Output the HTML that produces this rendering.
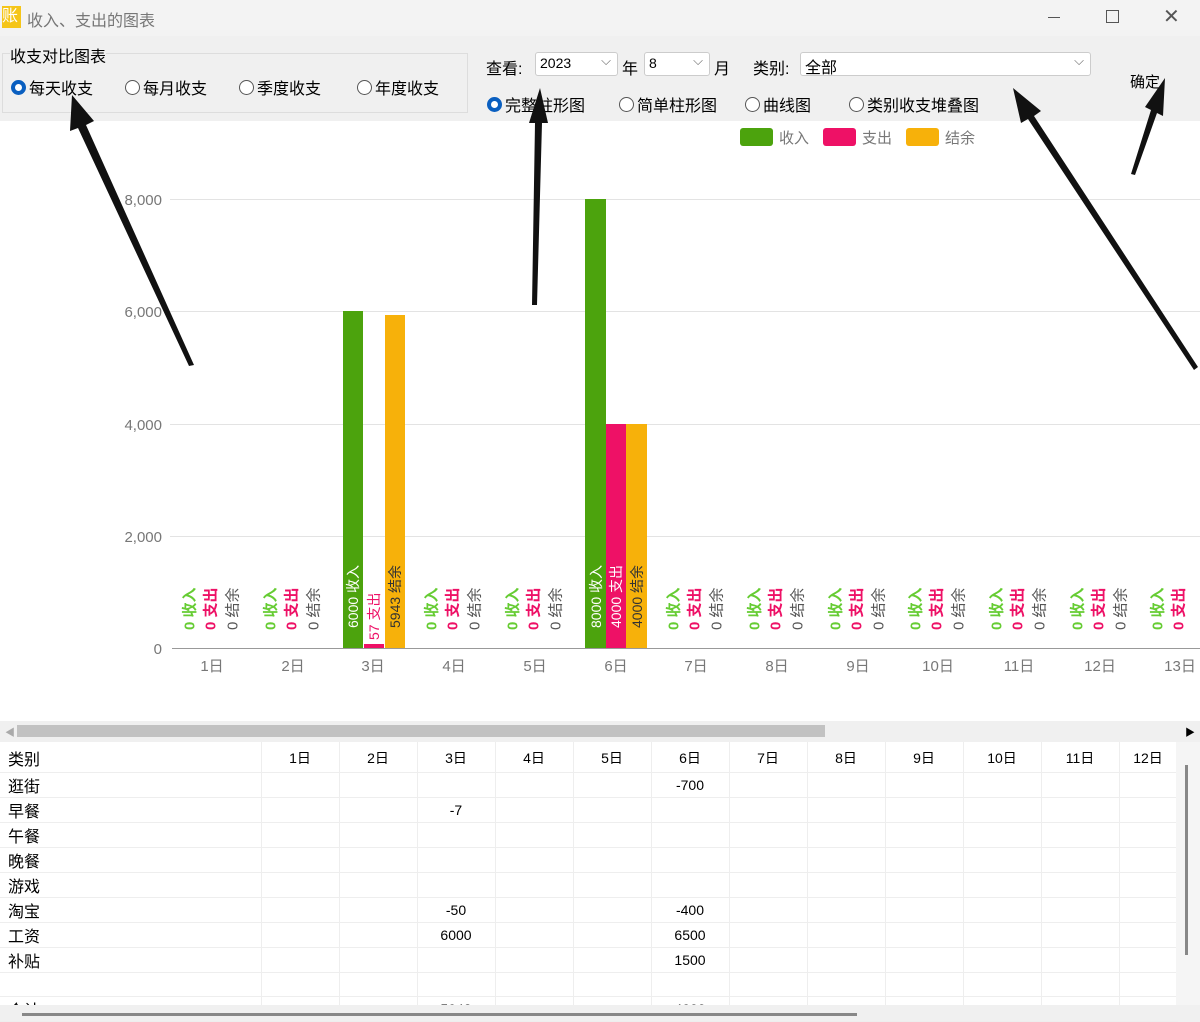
<!DOCTYPE html>
<html><head><meta charset="utf-8"><style>
*{margin:0;padding:0;box-sizing:border-box}
body{width:1200px;height:1021px;overflow:hidden;background:#f0f0f0;font-family:"Liberation Sans","Noto Sans CJK SC",sans-serif;font-size:15px;color:#000;position:relative}
.a{position:absolute}
.rad{position:absolute;display:flex;align-items:center;font-size:16px}
.rad i{display:inline-block;width:15px;height:15px;border:1px solid #555;border-radius:50%;margin-right:3px;background:#fff}
.rad i.on{border:4px solid #0a5fc0}
.sel{position:absolute;background:#fff;border:1px solid #ccc;border-radius:3px;height:24px;font-size:14px;padding:2px 4px}
.sel:after{content:"⌵";position:absolute;right:6px;top:0;color:#666;font-size:13px}
table{border-collapse:collapse;position:absolute;left:0;top:742px;background:#fff;font-size:14px}
td{border-right:1px solid #eee;border-bottom:1px solid #eee;height:24.8px;padding:0 8px;text-align:center}
tr:first-child td{height:30px;padding-top:2px}
td:first-child{text-align:left;font-size:16px}
</style></head><body>
<div class="a" style="left:0;top:0;width:1200px;height:36px;background:#f3f3f3"></div>
<div class="a" style="left:2px;top:6px;width:19px;height:22px;background:#f5c518;color:#fff;font-size:16px;line-height:22px">账</div>
<div class="a" style="left:27px;top:7px;font-size:16px;color:#777">收入、支出的图表</div>
<div class="a" style="left:1048px;top:17px;width:12px;height:1px;background:#555"></div>
<div class="a" style="left:1106px;top:10px;width:13px;height:13px;border:1px solid #555"></div>
<div class="a" style="left:1163px;top:4px;font-size:20px;color:#555">✕</div>

<div class="a" style="left:2px;top:53px;width:466px;height:60px;border:1px solid #ddd"></div>
<div class="a" style="left:10px;top:43px;font-size:16px;background:#f0f0f0">收支对比图表</div>
<div class="rad" style="left:11px;top:75px"><i class="on"></i>每天收支</div>
<div class="rad" style="left:125px;top:75px"><i></i>每月收支</div>
<div class="rad" style="left:239px;top:75px"><i></i>季度收支</div>
<div class="rad" style="left:357px;top:75px"><i></i>年度收支</div>

<div class="a" style="left:486px;top:55px;font-size:16px">查看:</div>
<div class="sel" style="left:535px;top:52px;width:83px">2023</div>
<div class="a" style="left:622px;top:55px;font-size:16px">年</div>
<div class="sel" style="left:644px;top:52px;width:66px">8</div>
<div class="a" style="left:714px;top:55px;font-size:16px">月</div>
<div class="a" style="left:753px;top:55px;font-size:16px">类别:</div>
<div class="sel" style="left:800px;top:52px;width:291px;font-size:16px;padding-top:1px">全部</div>
<div class="a" style="left:1130px;top:71px;font-size:15px">确定</div>
<div class="rad" style="left:487px;top:92px"><i class="on"></i>完整柱形图</div>
<div class="rad" style="left:619px;top:92px"><i></i>简单柱形图</div>
<div class="rad" style="left:745px;top:92px"><i></i>曲线图</div>
<div class="rad" style="left:849px;top:92px"><i></i>类别收支堆叠图</div>

<svg class="a" style="left:0;top:121px" width="1200" height="600" viewBox="0 121 1200 600">
<rect x="0" y="121" width="1200" height="600" fill="#fff"/>
<g font-size="15" fill="#777">
<rect x="740" y="128" width="33" height="18" rx="3" fill="#4ca30d"/><text x="779" y="143">收入</text>
<rect x="823" y="128" width="33" height="18" rx="3" fill="#ee1166"/><text x="862" y="143">支出</text>
<rect x="906" y="128" width="33" height="18" rx="3" fill="#f7b10a"/><text x="945" y="143">结余</text>
</g>
<g stroke="#e3e3e3"><line x1="170" y1="199.5" x2="1200" y2="199.5"/><line x1="170" y1="311.5" x2="1200" y2="311.5"/><line x1="170" y1="424.5" x2="1200" y2="424.5"/><line x1="170" y1="536.5" x2="1200" y2="536.5"/></g>
<line x1="172" y1="648.5" x2="1200" y2="648.5" stroke="#999"/>
<g font-size="15" fill="#777" text-anchor="end"><text x="162" y="205">8,000</text><text x="162" y="317">6,000</text><text x="162" y="430">4,000</text><text x="162" y="542">2,000</text><text x="162" y="654">0</text></g>
<g font-size="15" fill="#777" text-anchor="middle">
<text x="212" y="671">1日</text><text x="293" y="671">2日</text><text x="373" y="671">3日</text><text x="454" y="671">4日</text><text x="535" y="671">5日</text><text x="616" y="671">6日</text><text x="696" y="671">7日</text><text x="777" y="671">8日</text><text x="858" y="671">9日</text><text x="938" y="671">10日</text><text x="1019" y="671">11日</text><text x="1100" y="671">12日</text><text x="1180" y="671">13日</text></g>
<rect x="343" y="311" width="20" height="337" fill="#4ca30d"/>
<rect x="364" y="644" width="20" height="4" fill="#ee1166"/>
<rect x="385" y="315" width="20" height="333" fill="#f7b10a"/>
<rect x="585" y="199" width="21" height="449" fill="#4ca30d"/>
<rect x="606" y="424" width="20" height="224" fill="#ee1166"/>
<rect x="626" y="424" width="21" height="224" fill="#f7b10a"/>
<g font-size="14" dominant-baseline="central">
<text transform="translate(353,628) rotate(-90)" fill="#fff">6000 收入</text>
<text transform="translate(374,640) rotate(-90)" fill="#ee1166">57 支出</text>
<text transform="translate(395,628) rotate(-90)" fill="#333">5943 结余</text>
<text transform="translate(596,628) rotate(-90)" fill="#fff">8000 收入</text>
<text transform="translate(616,628) rotate(-90)" fill="#fff">4000 支出</text>
<text transform="translate(637,628) rotate(-90)" fill="#333">4000 结余</text>
</g>
<g font-size="15" font-weight="bold" dominant-baseline="central">
<text transform="translate(190,630) rotate(-90)" fill="#6c3">0 收入</text><text transform="translate(211,630) rotate(-90)" fill="#e16">0 支出</text><text transform="translate(233,630) rotate(-90)" fill="#555" font-weight="normal">0 结余</text>
<text transform="translate(271,630) rotate(-90)" fill="#6c3">0 收入</text><text transform="translate(292,630) rotate(-90)" fill="#e16">0 支出</text><text transform="translate(314,630) rotate(-90)" fill="#555" font-weight="normal">0 结余</text>
<text transform="translate(432,630) rotate(-90)" fill="#6c3">0 收入</text><text transform="translate(453,630) rotate(-90)" fill="#e16">0 支出</text><text transform="translate(475,630) rotate(-90)" fill="#555" font-weight="normal">0 结余</text>
<text transform="translate(513,630) rotate(-90)" fill="#6c3">0 收入</text><text transform="translate(534,630) rotate(-90)" fill="#e16">0 支出</text><text transform="translate(556,630) rotate(-90)" fill="#555" font-weight="normal">0 结余</text>
<text transform="translate(674,630) rotate(-90)" fill="#6c3">0 收入</text><text transform="translate(695,630) rotate(-90)" fill="#e16">0 支出</text><text transform="translate(717,630) rotate(-90)" fill="#555" font-weight="normal">0 结余</text>
<text transform="translate(755,630) rotate(-90)" fill="#6c3">0 收入</text><text transform="translate(776,630) rotate(-90)" fill="#e16">0 支出</text><text transform="translate(798,630) rotate(-90)" fill="#555" font-weight="normal">0 结余</text>
<text transform="translate(836,630) rotate(-90)" fill="#6c3">0 收入</text><text transform="translate(857,630) rotate(-90)" fill="#e16">0 支出</text><text transform="translate(879,630) rotate(-90)" fill="#555" font-weight="normal">0 结余</text>
<text transform="translate(916,630) rotate(-90)" fill="#6c3">0 收入</text><text transform="translate(937,630) rotate(-90)" fill="#e16">0 支出</text><text transform="translate(959,630) rotate(-90)" fill="#555" font-weight="normal">0 结余</text>
<text transform="translate(997,630) rotate(-90)" fill="#6c3">0 收入</text><text transform="translate(1018,630) rotate(-90)" fill="#e16">0 支出</text><text transform="translate(1040,630) rotate(-90)" fill="#555" font-weight="normal">0 结余</text>
<text transform="translate(1078,630) rotate(-90)" fill="#6c3">0 收入</text><text transform="translate(1099,630) rotate(-90)" fill="#e16">0 支出</text><text transform="translate(1121,630) rotate(-90)" fill="#555" font-weight="normal">0 结余</text>
<text transform="translate(1158,630) rotate(-90)" fill="#6c3">0 收入</text><text transform="translate(1179,630) rotate(-90)" fill="#e16">0 支出</text>
</g>
</svg>

<div class="a" style="left:0;top:722px;width:1200px;height:18px;background:#f0f0f0"></div>
<div class="a" style="left:17px;top:725px;width:808px;height:12px;background:#c2c2c2"></div>
<div class="a" style="left:5px;top:724px;font-size:10px;color:#aaa">◀</div>
<div class="a" style="left:1185px;top:724px;font-size:10px;color:#000">▶</div>

<table>
<tr><td style="width:261px">类别</td><td style="width:78px">1日</td><td style="width:78px">2日</td><td style="width:78px">3日</td><td style="width:78px">4日</td><td style="width:78px">5日</td><td style="width:78px">6日</td><td style="width:78px">7日</td><td style="width:78px">8日</td><td style="width:78px">9日</td><td style="width:78px">10日</td><td style="width:78px">11日</td><td style="width:58px">12日</td></tr>
<tr><td>逛街</td><td></td><td></td><td></td><td></td><td></td><td>-700</td><td></td><td></td><td></td><td></td><td></td><td></td></tr>
<tr><td>早餐</td><td></td><td></td><td>-7</td><td></td><td></td><td></td><td></td><td></td><td></td><td></td><td></td><td></td></tr>
<tr><td>午餐</td><td></td><td></td><td></td><td></td><td></td><td></td><td></td><td></td><td></td><td></td><td></td><td></td></tr>
<tr><td>晚餐</td><td></td><td></td><td></td><td></td><td></td><td></td><td></td><td></td><td></td><td></td><td></td><td></td></tr>
<tr><td>游戏</td><td></td><td></td><td></td><td></td><td></td><td></td><td></td><td></td><td></td><td></td><td></td><td></td></tr>
<tr><td>淘宝</td><td></td><td></td><td>-50</td><td></td><td></td><td>-400</td><td></td><td></td><td></td><td></td><td></td><td></td></tr>
<tr><td>工资</td><td></td><td></td><td>6000</td><td></td><td></td><td>6500</td><td></td><td></td><td></td><td></td><td></td><td></td></tr>
<tr><td>补贴</td><td></td><td></td><td></td><td></td><td></td><td>1500</td><td></td><td></td><td></td><td></td><td></td><td></td></tr>
<tr><td></td><td></td><td></td><td></td><td></td><td></td><td></td><td></td><td></td><td></td><td></td><td></td><td></td></tr>
<tr><td>合计</td><td></td><td></td><td>5943</td><td></td><td></td><td>4000</td><td></td><td></td><td></td><td></td><td></td><td></td></tr>
</table>
<div class="a" style="left:1176px;top:742px;width:24px;height:270px;background:#f5f5f5"></div>
<div class="a" style="left:1185px;top:765px;width:3px;height:190px;background:#888"></div>
<div class="a" style="left:0;top:1005px;width:1200px;height:16px;background:#f0f0f0"></div>
<div class="a" style="left:22px;top:1013px;width:835px;height:3px;background:#888"></div>

<svg class="a" style="left:0;top:0" width="1200" height="1021">
<g fill="#111">
<polygon points="72,95 94,121 86,125 194,365 189,366 78,128 70,131"/>
<polygon points="540,88 548,123 542,123 537,305 532,305 535,123 529,123"/>
<polygon points="1013,88 1041,111 1034,116 1198,367 1194,370 1028,119 1021,123"/>
<polygon points="1165,78 1163,116 1157,113 1135,175 1131,174 1151,110 1145,107"/>
</g></svg>
</body></html>
